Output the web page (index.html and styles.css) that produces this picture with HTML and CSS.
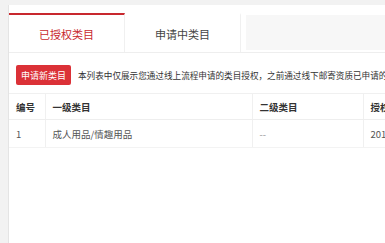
FILE: index.html
```html
<!DOCTYPE html>
<html lang="zh-CN">
<head>
    <meta charset="UTF-8">
    <title>类目管理</title>
    <link rel="stylesheet" href="styles.css">
</head>
<body>
    <div class="page">
        <div class="panel">
            <div class="tabs">
                <div class="tab active">已授权类目</div>
                <div class="tab">申请中类目</div>
                <div class="tab-fill"></div>
            </div>

            <div class="toolbar">
                <button class="btn-apply">申请新类目</button>
                <span class="tip">本列表中仅展示您通过线上流程申请的类目授权，之前通过线下邮寄资质已申请的类目请在这里查看</span>
            </div>

            <table class="cat-table">
                <colgroup>
                    <col style="width: 36px">
                    <col style="width: 207px">
                    <col style="width: 111px">
                    <col style="width: 140px">
                </colgroup>
                <thead>
                    <tr>
                        <th>编号</th>
                        <th>一级类目</th>
                        <th>二级类目</th>
                        <th>授权时间</th>
                    </tr>
                </thead>
                <tbody>
                    <tr>
                        <td>1</td>
                        <td>成人用品/情趣用品</td>
                        <td class="muted">--</td>
                        <td>2019-05-20</td>
                    </tr>
                </tbody>
            </table>
        </div>
    </div>
</body>
</html>
```

FILE: styles.css
```css
body {
    margin: 0;
    padding: 0;
    overflow: hidden;
    font-family: "Noto Sans CJK SC", "Liberation Sans", sans-serif;
    color: #333;
    background-color: #f2f2f2;
}

.page {
    padding: 5px 0 0 8px;
    height: 238px;
}

.panel {
    height: 100%;
    background-color: #fff;
    border-left: 1px solid #e4e4e4;
    padding-top: 8px;
    overflow: hidden;
}

/* 选项卡 */
.tabs {
    display: flex;
    height: 39px;
    border-bottom: 1px solid #eee;
}

.tab {
    width: 115px;
    display: flex;
    align-items: center;
    justify-content: center;
    font-size: 11px;
    color: #444;
    border-top: 2px solid transparent;
    border-right: 1px solid #f0f0f0;
}

.tab.active {
    color: #c8282e;
    border-top-color: #c8282e;
}

.tab-fill {
    flex: 1;
    margin: 2px 0 2px 5px;
    background-color: #f7f7f7;
}

/* 操作栏 */
.toolbar {
    display: flex;
    align-items: center;
    gap: 7px;
    padding: 12px 0 8px 7px;
    white-space: nowrap;
}

.btn-apply {
    height: 20px;
    padding: 0 5px;
    border: none;
    border-radius: 2px;
    background-color: #db3137;
    color: #fff;
    font-family: inherit;
    font-size: 9px;
    cursor: pointer;
}

.tip {
    font-size: 8.6px;
    color: #333;
}

/* 列表 */
.cat-table {
    table-layout: fixed;
    width: 494px;
    border-collapse: collapse;
    font-size: 9.5px;
}

.cat-table th,
.cat-table td {
    text-align: left;
    padding: 0 7px;
    white-space: nowrap;
    overflow: hidden;
    border-left: 1px solid #f0f0f0;
}

.cat-table th:first-child,
.cat-table td:first-child {
    border-left: none;
}

.cat-table th {
    height: 25px;
    font-weight: bold;
    color: #333;
    border-top: 1px solid #f0f0f0;
    border-bottom: 1px solid #eee;
}

.cat-table td {
    height: 27px;
    color: #555;
    border-bottom: 1px solid #f3f3f3;
}

.cat-table .muted {
    color: #999;
}
```
